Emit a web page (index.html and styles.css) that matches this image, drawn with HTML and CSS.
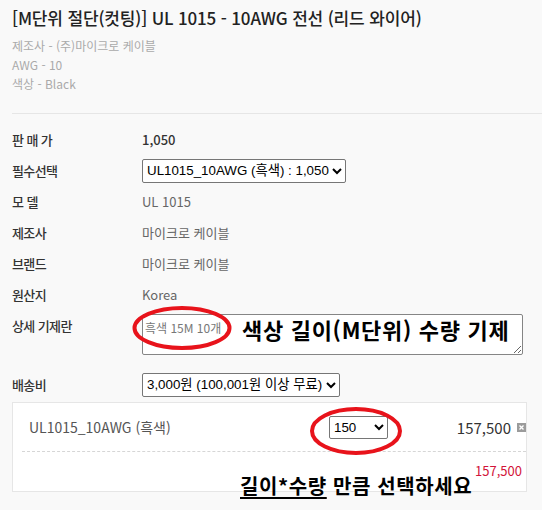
FILE: index.html
```html
<!DOCTYPE html>
<html lang="ko">
<head>
    <meta charset="UTF-8">
    <meta name="viewport" content="width=device-width, initial-scale=1.0">
    <title>UL 1015 - 10AWG 전선</title>
    <link rel="stylesheet" href="styles.css">
</head>
<body>
    <div class="page">
        <h1 class="title">[M단위 절단(컷팅)] UL 1015 - 10AWG 전선 (리드 와이어)</h1>
        <div class="summary">
            <p>제조사 - (주)마이크로 케이블</p>
            <p>AWG - 10</p>
            <p>색상 - Black</p>
        </div>

        <div class="spec">
            <div class="row">
                <span class="label">판 매 가</span>
                <span class="value price">1,050</span>
            </div>
            <div class="row">
                <span class="label">필수선택</span>
                <select class="opt">
                    <option>UL1015_10AWG (흑색) : 1,050</option>
                </select>
            </div>
            <div class="row">
                <span class="label">모 델</span>
                <span class="value">UL 1015</span>
            </div>
            <div class="row">
                <span class="label">제조사</span>
                <span class="value">마이크로 케이블</span>
            </div>
            <div class="row">
                <span class="label">브랜드</span>
                <span class="value">마이크로 케이블</span>
            </div>
            <div class="row">
                <span class="label">원산지</span>
                <span class="value">Korea</span>
            </div>
            <div class="row row-memo">
                <span class="label">상세 기제란</span>
                <textarea class="memo" placeholder="흑색 15M 10개"></textarea>
                <span class="note note-memo">색상 길이(M단위) 수량 기제</span>
            </div>
            <div class="row">
                <span class="label">배송비</span>
                <select class="opt">
                    <option>3,000원 (100,001원 이상 무료)</option>
                </select>
            </div>
        </div>

        <div class="cart">
            <div class="cart-item">
                <span class="item-name">UL1015_10AWG (흑색)</span>
                <select class="qty">
                    <option>150</option>
                </select>
                <span class="item-price">157,500
                    <svg class="remove" width="9" height="9" viewBox="0 0 9 9">
                        <rect width="9" height="9" fill="#9b9b9b"/>
                        <path d="M2.5 2.5 L6.5 6.5 M6.5 2.5 L2.5 6.5" stroke="#fff" stroke-width="1.4"/>
                    </svg>
                </span>
            </div>
            <div class="cart-total">157,500</div>
        </div>
        <div class="note note-qty"><span class="under">길이*수량</span> 만큼 선택하세요</div>
    </div>

    <!-- red marks drawn over the screenshot -->
    <svg class="marks" width="542" height="510" viewBox="0 0 542 510">
        <ellipse cx="182" cy="328" rx="47.5" ry="20" fill="none" stroke="#e8131b" stroke-width="4"/>
        <ellipse cx="356" cy="431" rx="44" ry="22" fill="none" stroke="#e8131b" stroke-width="4"/>
    </svg>
</body>
</html>
```

FILE: styles.css
```css
html, body {
    height: 100%;
}
body {
    margin: 0;
    background-color: #f9f9f9;
    font-family: "Noto Sans CJK KR", "Noto Sans", sans-serif;
    color: #333;
}
.page {
    position: relative;
    min-height: 510px;
    padding: 5px 0 0 12px;
    box-sizing: border-box;
}
.title {
    margin: 0;
    font-size: 17px;
    font-weight: 500;
    line-height: 26px;
    letter-spacing: -0.15px;
    color: #222;
}
.summary {
    padding: 5px 0 20px;
    border-bottom: 1px solid #e6e6e6;
}
.summary p {
    margin: 0;
    font-size: 12px;
    line-height: 19px;
    color: #aaa;
}
.spec {
    padding-top: 10px;
}
.row {
    position: relative;
    display: flex;
    align-items: center;
    height: 31px;
}
.label {
    width: 130px;
    font-size: 13px;
    font-weight: 500;
    letter-spacing: -0.6px;
    color: #333;
}
.value {
    font-size: 13px;
    color: #666;
}
.value.price {
    font-weight: 500;
    color: #333;
}
.opt {
    height: 24px;
    font-family: "Liberation Sans", "Noto Sans CJK KR", sans-serif;
    font-size: 13.33px;
    color: #000;
    background-color: #fff;
    border: 1px solid #767676;
    border-radius: 2px;
}
.row-memo {
    height: auto;
    align-items: flex-start;
    padding: 4px 0 14px;
}
.row-memo .label {
    padding-top: 2px;
}
.memo {
    width: 381px;
    height: 41px;
    box-sizing: border-box;
    margin: 0;
    padding: 4px 2px;
    font-family: "Noto Sans CJK KR", sans-serif;
    font-size: 12px;
    background-color: #fff;
    border: 1px solid #858585;
    border-radius: 2px;
}
.memo::placeholder {
    color: #777;
}
.note {
    position: absolute;
    z-index: 2;
    font-weight: bold;
    color: #000;
    white-space: nowrap;
}
.note-memo {
    left: 230px;
    top: 6px;
    font-size: 22px;
    line-height: 26px;
    letter-spacing: 0.7px;
}
.cart {
    margin: 2px 15px 0 0;
    height: 88px;
    background-color: #fff;
    border: 1px solid #e6e6e6;
}
.cart-item {
    display: grid;
    grid-template-columns: 1fr 59px 138px;
    align-items: center;
    height: 48px;
    margin-left: 9px;
    padding-left: 7px;
    border-bottom: 1px dashed #d6d6d6;
}
.item-name {
    font-size: 14px;
    color: #555;
}
.qty {
    width: 59px;
    height: 23px;
    font-family: "Liberation Sans", sans-serif;
    font-size: 13.33px;
    color: #000;
    background-color: #fff;
    border: 1px solid #767676;
    border-radius: 2px;
}
.item-price {
    display: flex;
    align-items: center;
    justify-content: flex-end;
    gap: 6px;
    font-size: 15px;
    color: #333;
}
.cart-total {
    padding: 9px 4px 0 0;
    text-align: right;
    font-size: 13px;
    color: #d2143a;
}
.note-qty {
    left: 240px;
    top: 474px;
    font-size: 20px;
    line-height: 24px;
    letter-spacing: 0.6px;
}
.note-qty .under {
    text-decoration: underline;
    text-decoration-thickness: 2px;
    text-underline-offset: 3px;
    text-decoration-skip-ink: none;
}
.marks {
    position: absolute;
    top: 0;
    left: 0;
    pointer-events: none;
}
```
